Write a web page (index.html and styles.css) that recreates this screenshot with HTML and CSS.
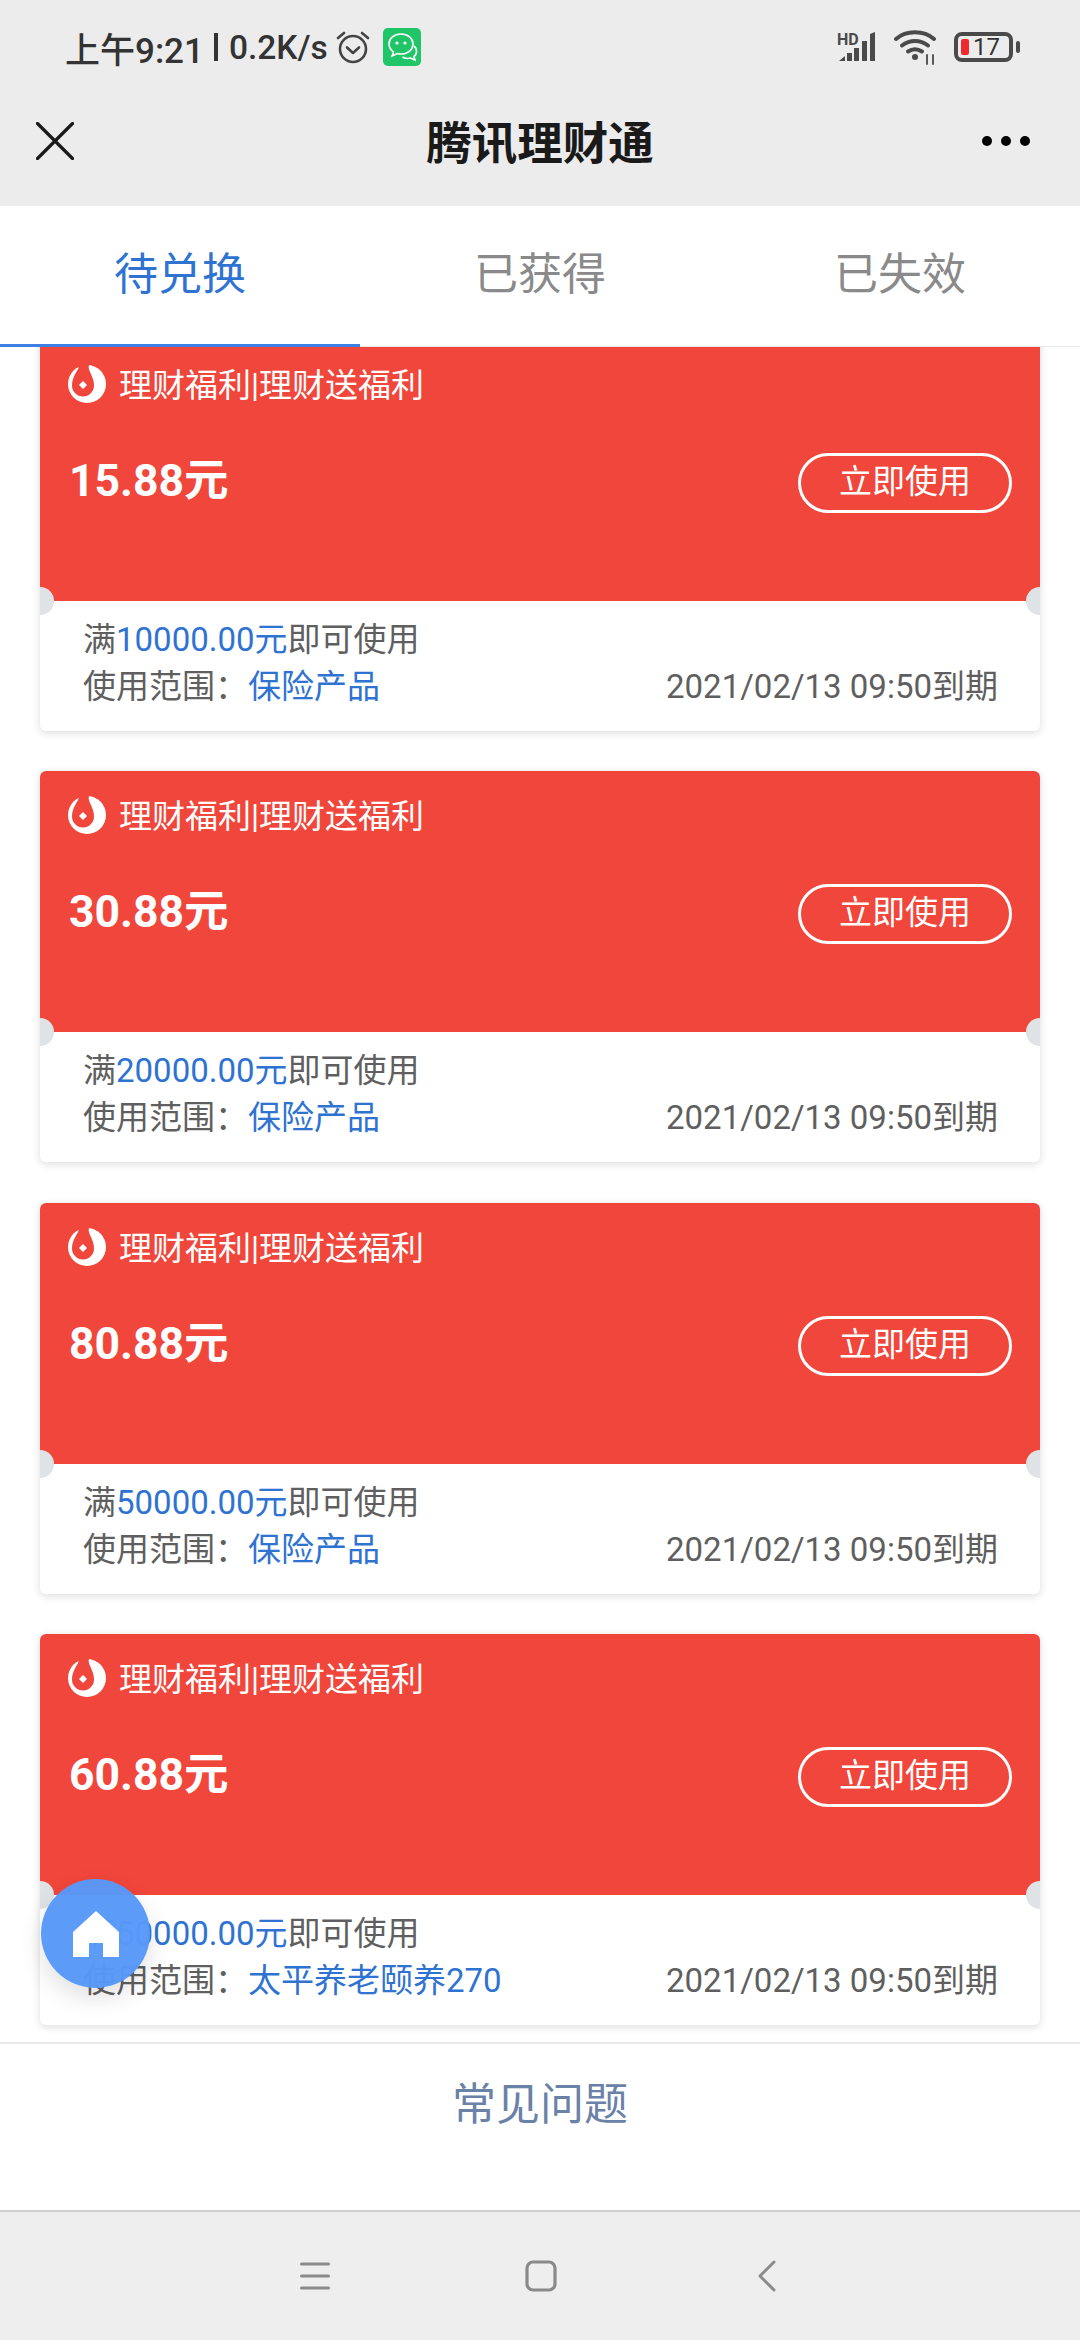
FILE: index.html
```html
<!DOCTYPE html>
<html lang="zh-CN">
<head>
    <meta charset="UTF-8">
    <title>腾讯理财通</title>
    <link rel="stylesheet" href="styles.css">
</head>
<body>
<div class="page">
    <header class="top">
        <div class="status">
            <span class="status-text">上午9:21</span>
            <span class="status-bar"></span>
            <span class="status-text status-speed">0.2K/s</span>
            <svg class="alarm" width="36" height="36" viewBox="0 0 36 36" fill="none" stroke="#444" stroke-width="2.6" stroke-linecap="round" stroke-linejoin="round">
                <circle cx="18" cy="20" r="13"/>
                <path d="M12 18.500l6 5.500 6-5.500"/>
                <path d="M3 9l6-5M33 9l-6-5"/>
            </svg>
            <svg class="wechat" width="38" height="38" viewBox="0 0 38 38">
                <rect width="38" height="38" rx="5" fill="#1fc566"/>
                <path d="M18 6c-7 0-12 4.500-12 10 0 3.500 2 6 4.500 8L9 28l5.500-2.500c1 .3 2.300.5 3.500.5 7 0 12-4.500 12-10S25 6 18 6z" fill="none" stroke="#fff" stroke-width="1.600"/>
                <path d="M31 18c2 1.500 2.500 3.500 2.500 5.500 0 2-1 4-2.500 5l1 3.500-4.500-2c-3 .8-6 .3-8-1" fill="none" stroke="#fff" stroke-width="1.600"/>
                <circle cx="14" cy="15" r="1.600" fill="#fff"/>
                <circle cx="22" cy="15" r="1.600" fill="#fff"/>
            </svg>
            <span class="status-space"></span>
            <svg class="signal" width="44" height="34" viewBox="0 0 44 34">
                <text class="signal-hd" x="0" y="15">HD</text>
                <path d="M2 31l6-5v5zM10 23h5v8h-5zM17 18h5v13h-5zM25 11h5v20h-5zM33 4l5-2v29h-5z" fill="#4a4a4a"/>
            </svg>
            <svg class="wifi" width="42" height="36" viewBox="0 0 42 36" fill="none" stroke="#4a4a4a" stroke-width="4" stroke-linecap="round">
                <path d="M2 10C12 1 30 1 40 10"/>
                <path d="M8 16.500c8-6 18-6 26 0"/>
                <path d="M14 22.500c4.500-3 9.500-3 14 0"/>
                <circle cx="21" cy="28" r="3" fill="#4a4a4a" stroke="none"/>
                <path d="M33 26v9M39 26v9" stroke-width="1.800"/>
            </svg>
            <div class="battery">
                <span class="battery-level"></span>
                <span class="battery-num">17</span>
            </div>
            <span class="battery-tip"></span>
        </div>
        <div class="titlebar">
            <svg class="close" width="38" height="38" viewBox="0 0 38 38" stroke="#1a1a1a" stroke-width="3.200" stroke-linecap="round">
                <path d="M1.500 1.500l35 35M36.500 1.500l-35 35"/>
            </svg>
            <h1 class="title">腾讯理财通</h1>
            <div class="more"><i></i><i></i><i></i></div>
        </div>
    </header>

    <nav class="tabs">
        <a class="tab active">待兑换</a>
        <a class="tab">已获得</a>
        <a class="tab">已失效</a>
    </nav>

    <main class="list">
        <div class="card">
            <div class="card-top">
                <div class="card-head">
                    <svg class="logo" width="38" height="38" viewBox="0 0 38 38"><use href="#licai"/></svg>
                    <span>理财福利|理财送福利</span>
                </div>
                <div class="card-main">
                    <span class="amount">15.88元</span>
                    <a class="use-btn">立即使用</a>
                </div>
            </div>
            <div class="card-bottom">
                <div>满<em>10000.00元</em>即可使用</div>
                <div class="card-row">
                    <span>使用范围：<em>保险产品</em></span>
                    <span>2021/02/13 09:50到期</span>
                </div>
            </div>
            <span class="notch notch-l"></span>
            <span class="notch notch-r"></span>
        </div>

        <div class="card">
            <div class="card-top">
                <div class="card-head">
                    <svg class="logo" width="38" height="38" viewBox="0 0 38 38"><use href="#licai"/></svg>
                    <span>理财福利|理财送福利</span>
                </div>
                <div class="card-main">
                    <span class="amount">30.88元</span>
                    <a class="use-btn">立即使用</a>
                </div>
            </div>
            <div class="card-bottom">
                <div>满<em>20000.00元</em>即可使用</div>
                <div class="card-row">
                    <span>使用范围：<em>保险产品</em></span>
                    <span>2021/02/13 09:50到期</span>
                </div>
            </div>
            <span class="notch notch-l"></span>
            <span class="notch notch-r"></span>
        </div>

        <div class="card">
            <div class="card-top">
                <div class="card-head">
                    <svg class="logo" width="38" height="38" viewBox="0 0 38 38"><use href="#licai"/></svg>
                    <span>理财福利|理财送福利</span>
                </div>
                <div class="card-main">
                    <span class="amount">80.88元</span>
                    <a class="use-btn">立即使用</a>
                </div>
            </div>
            <div class="card-bottom">
                <div>满<em>50000.00元</em>即可使用</div>
                <div class="card-row">
                    <span>使用范围：<em>保险产品</em></span>
                    <span>2021/02/13 09:50到期</span>
                </div>
            </div>
            <span class="notch notch-l"></span>
            <span class="notch notch-r"></span>
        </div>

        <div class="card">
            <div class="card-top">
                <div class="card-head">
                    <svg class="logo" width="38" height="38" viewBox="0 0 38 38"><use href="#licai"/></svg>
                    <span>理财福利|理财送福利</span>
                </div>
                <div class="card-main">
                    <span class="amount">60.88元</span>
                    <a class="use-btn">立即使用</a>
                </div>
            </div>
            <div class="card-bottom">
                <div>满<em>50000.00元</em>即可使用</div>
                <div class="card-row">
                    <span>使用范围：<em>太平养老颐养270</em></span>
                    <span>2021/02/13 09:50到期</span>
                </div>
            </div>
            <span class="notch notch-l"></span>
            <span class="notch notch-r"></span>
        </div>
    </main>

    <footer class="faq"><a>常见问题</a></footer>

    <div class="sysnav">
        <svg width="30" height="30" viewBox="0 0 30 30" stroke="#8a8a8a" stroke-width="3" stroke-linecap="round">
            <path d="M1.500 3h27M1.500 15h27M1.500 27h27"/>
        </svg>
        <svg width="32" height="32" viewBox="0 0 32 32" fill="none" stroke="#8a8a8a" stroke-width="3.200">
            <rect x="2" y="2" width="28" height="28" rx="6"/>
        </svg>
        <svg width="18" height="32" viewBox="0 0 18 32" fill="none" stroke="#8a8a8a" stroke-width="3" stroke-linecap="round" stroke-linejoin="round">
            <path d="M16 2L2 16l14 14"/>
        </svg>
    </div>

    <a class="home-btn">
        <svg width="46" height="46" viewBox="0 0 46 46">
            <path d="M23 0L46 21v25H30V32H16v14H0V21z" fill="#fff"/>
        </svg>
    </a>
</div>

<svg class="defs" width="0" height="0">
    <symbol id="licai" viewBox="0 0 38 38">
        <circle cx="19" cy="19" r="19" fill="#fff"/>
        <path d="M10.500 0L21 0C19 5 26 11 26 20.500A11 11 0 0 1 4 20.500C4 13 8 8 10.500 3z" fill="#f1463b"/>
        <path d="M15 16l4 4-4 4-4-4z" fill="#fff"/>
    </symbol>
</svg>
</body>
</html>
```

FILE: styles.css
```css
html, body, div, h1, a, span {
    margin: 0;
    padding: 0;
}
html, body {
    width: 1080px;
    height: 2340px;
    overflow: hidden;
}
body {
    font-family: Roboto, "Noto Sans CJK SC", sans-serif;
    background-color: #fff;
}
em {
    font-style: normal;
    color: #2f73d2;
}
.page {
    position: relative;
    width: 1080px;
    height: 2340px;
    display: flex;
    flex-direction: column;
}
.defs {
    position: absolute;
}

/* top grey area */
.top {
    height: 206px;
    flex-shrink: 0;
    background-color: #ececec;
}
.status {
    height: 94px;
    display: flex;
    align-items: center;
    padding: 0 60px 0 65px;
}
.status-text {
    font-size: 35px;
    font-weight: 500;
    color: #333;
}
.status-speed {
    font-size: 33.500px;
}
.status-bar {
    width: 4px;
    height: 28px;
    margin: 0 11px 0 10px;
    background-color: #333;
}
.alarm {
    margin-left: 7px;
}
.wechat {
    margin-left: 12px;
}
.status-space {
    flex: 1;
}
.signal-hd {
    font: bold 16px Roboto, sans-serif;
    fill: #4a4a4a;
}
.wifi {
    margin-left: 13px;
}
.battery {
    width: 59px;
    height: 30px;
    margin-left: 18px;
    box-sizing: border-box;
    border: 4px solid #4a4a4a;
    border-radius: 8px;
    display: flex;
    align-items: center;
    padding-left: 3px;
}
.battery-level {
    width: 8px;
    height: 16px;
    background-color: #ee2a2f;
    border-radius: 2px;
}
.battery-num {
    margin-left: 4px;
    font-size: 24px;
    line-height: 22px;
    color: #333;
}
.battery-tip {
    width: 4px;
    height: 12px;
    margin-left: 3px;
    background-color: #4a4a4a;
    border-radius: 2px;
}
.titlebar {
    height: 92px;
    display: grid;
    grid-template-columns: 1fr auto 1fr;
    align-items: center;
    padding: 0 50px 0 50px;
}
.title {
    font-size: 45.500px;
    font-weight: bold;
    color: #1a1a1a;
}
.close {
    margin: 2px 0 0 -14px;
}
.more {
    display: flex;
    justify-content: flex-end;
    gap: 9px;
    margin-top: 2px;
}
.more i {
    width: 10px;
    height: 10px;
    border-radius: 50%;
    background-color: #000;
}

/* tabs */
.tabs {
    height: 141px;
    flex-shrink: 0;
    box-sizing: border-box;
    display: flex;
    border-bottom: 1px solid #e8e8e8;
}
.tab {
    flex: 1;
    box-sizing: border-box;
    height: 141px;
    font-size: 44px;
    line-height: 138px;
    text-align: center;
    color: #8a8a8a;
}
.tab.active {
    color: #2f73d2;
    border-bottom: 3px solid #3c80e4;
}

/* coupon list */
.list {
    flex: 1;
    overflow: hidden;
    padding: 0 40px;
    display: flex;
    flex-direction: column;
    gap: 40.500px;
}
.card {
    position: relative;
    flex-shrink: 0;
    height: 391px;
    overflow: hidden;
    border-radius: 6px;
    background-color: #fff;
    box-shadow: 0 2px 8px rgba(0,0,0,.14);
}
.card:first-child {
    margin-top: -7.500px;
}
.card-top {
    height: 261px;
    box-sizing: border-box;
    padding: 22px 28px 0 28px;
    background-color: #f1463b;
    color: #fff;
}
.card-head {
    display: flex;
    align-items: center;
    gap: 13px;
    height: 42px;
    font-size: 33px;
}
.logo {
    flex-shrink: 0;
    margin-top: 2px;
}
.card-main {
    display: flex;
    align-items: center;
    justify-content: space-between;
    margin-top: 49px;
}
.amount {
    font-size: 44.500px;
    line-height: 60px;
    font-weight: bold;
    margin: -4px 0 0 1px;
}
.use-btn {
    width: 214px;
    height: 60px;
    box-sizing: border-box;
    border: 3px solid #fff;
    border-radius: 30px;
    font-size: 33px;
    line-height: 52px;
    text-align: center;
}
.card-bottom {
    padding: 15px 42px 0 43px;
    font-size: 33px;
    line-height: 47px;
    color: #5f5f5f;
}
.card-row {
    display: flex;
    justify-content: space-between;
}
.notch {
    position: absolute;
    top: 247px;
    width: 28px;
    height: 28px;
    border-radius: 50%;
    background-color: #dfe3e6;
}
.notch-l {
    left: -14px;
}
.notch-r {
    right: -14px;
}

/* bottom */
.faq {
    height: 168px;
    flex-shrink: 0;
    box-sizing: border-box;
    border-top: 2px solid #e8e8e8;
    padding-top: 25px;
    text-align: center;
    font-size: 44px;
    color: #6b82a8;
}
.sysnav {
    height: 130px;
    flex-shrink: 0;
    box-sizing: border-box;
    border-top: 2px solid #cfcfcf;
    background-color: #eee;
    display: grid;
    grid-template-columns: repeat(3, 226px);
    justify-content: center;
    justify-items: center;
    align-items: center;
    padding-left: 2px;
}
.home-btn {
    position: absolute;
    left: 41px;
    top: 1879px;
    width: 109px;
    height: 109px;
    border-radius: 50%;
    background-color: rgba(88,152,248,.97);
    box-shadow: 0 10px 24px rgba(0,0,0,.12);
    display: flex;
    align-items: center;
    justify-content: center;
}
```
